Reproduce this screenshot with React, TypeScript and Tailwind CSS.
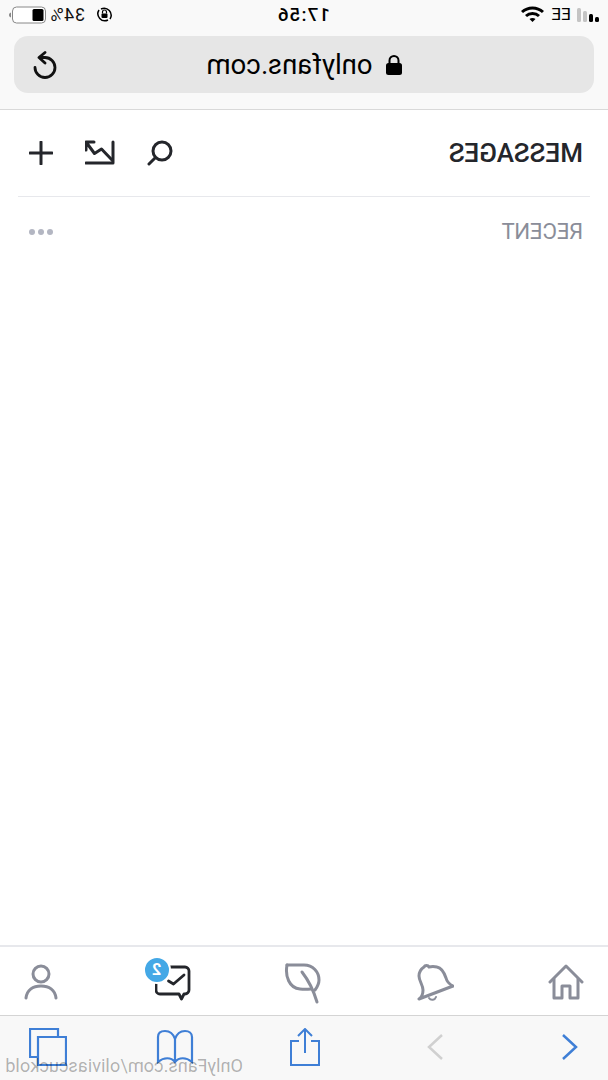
import React from 'react';

const Avatar = () => (
  <svg width="34" height="36" viewBox="0 0 34 36" fill="none" stroke="#8a8d99" strokeWidth="3" strokeLinecap="round" className="mt-[1px]">
    <circle cx="17" cy="10" r="8" />
    <path d="M2 34c1-8 7-12 15-12s14 4 15 12" />
  </svg>
);

const Bubble = () => (
  <svg width="36" height="37" viewBox="0 0 36 37" fill="none" stroke="#24262b" strokeWidth="2.800" strokeLinecap="round" strokeLinejoin="round">
    <path d="M6 3h25a4 4 0 0 1 4 4v19a4 4 0 0 1-4 4H12l-2.500 5L7 30H6a4 4 0 0 1-4-4V7a4 4 0 0 1 4-4z" />
    <path d="M7 11l10.500 9 5-3" />
  </svg>
);

const Leaf = () => (
  <svg width="38" height="42" viewBox="0 0 38 42" fill="none" stroke="#8a8d99" strokeWidth="3" strokeLinecap="round" strokeLinejoin="round" className="mt-[4px]">
    <path d="M35 3H18C9 3 3 10 3 18c0 3 1 6 4 10" />
    <path d="M35 3c2 11-2 23-13 24-3 .300-7 .300-11 0" />
    <path d="M20 10C13 19 8 30 5 40" />
  </svg>
);

const Bell = () => (
  <svg width="38" height="42" viewBox="0 0 38 42" fill="none" stroke="#8a8d99" strokeWidth="3" strokeLinecap="round" strokeLinejoin="round" className="mt-[4px]">
    <path d="M1 24c4-2 6-4 7-8 2-6 4-10 9-11 3-.700 6-.500 8 0 1-2 4-2 5 0 3 2 5 5 5 9 0 5-4 9-4 14 0 4 1 7 4 9z" />
    <path d="M18 35c1 3 5 4 7 1" strokeWidth="2" />
  </svg>
);

const Home = () => (
  <svg width="36" height="36" viewBox="0 0 36 36" fill="none" stroke="#8a8d99" strokeWidth="3" strokeLinecap="round" strokeLinejoin="round" className="mt-[1px]">
    <path d="M2 18L18 2l16 16" />
    <path d="M6 15v19h8V22h8v12h8V15" />
  </svg>
);

export default function App() {
  return (
    <div className="relative flex h-[1080px] w-[608px] -scale-x-100 flex-col overflow-hidden bg-white font-['Roboto',sans-serif]">
      {/* safari chrome */}
      <div className="h-[110px] border-b border-[#d9d9d9] bg-[#f9f9f9]">
        <div className="flex h-[36px] items-center justify-between pb-[7px] pl-[9px] pr-[8px]">
          <div className="flex w-[200px] items-center gap-[8px]">
            <svg width="23" height="14" viewBox="0 0 23 14" fill="#000">
              <rect x="0" y="9" width="4" height="5" rx="1.500" />
              <rect x="6" y="6" width="4" height="8" rx="1.500" />
              <rect x="12" y="3" width="4" height="11" rx="1.500" fill="#c4c4c4" />
              <rect x="18" y="0" width="4" height="14" rx="1.500" fill="#c4c4c4" />
            </svg>
            <span className="ml-[-3px] text-[17px] leading-none">EE</span>
            <svg width="23" height="17" viewBox="0 0 23 17" fill="none" stroke="#000" strokeWidth="3">
              <path d="M1 6c6-5.500 15-5.500 21 0" />
              <path d="M5 10c3.500-3.200 9.500-3.200 13 0" />
              <path d="M11.500 16l-3-3c1.800-1.300 4.200-1.300 6 0z" fill="#000" stroke="none" />
            </svg>
          </div>
          <span className="text-[19px] font-medium leading-none tracking-[1px] text-black">17:56</span>
          <div className="flex w-[200px] items-center justify-end gap-[4px]">
            <svg width="17" height="17" viewBox="0 0 17 17" fill="none" stroke="#000" strokeWidth="1.500" className="mr-[7px]">
              <path d="M3 13a7 7 0 0 1 9-10M14 4a7 7 0 0 1-9 10" />
              <rect x="5.500" y="7.500" width="6" height="4.500" rx="1" fill="#000" stroke="none" />
              <path d="M6.500 7.500V6a2 2 0 0 1 4 0v1.500" strokeWidth="1.200" />
            </svg>
            <span className="text-[18px] leading-none tracking-[0.500px] text-[#111]">34%</span>
            <svg width="38" height="18" viewBox="0 0 38 18">
              <rect x="0.500" y="1" width="33" height="16" rx="4" fill="#fff" stroke="#888" />
              <rect x="2.500" y="3" width="11" height="12" rx="1.500" fill="#000" />
              <path d="M35 6.500c1.500.5 2 1.500 2 2.500s-.5 2-2 2.500z" fill="#888" />
            </svg>
          </div>
        </div>
        <div className="mx-[14px] flex h-[57px] items-center rounded-[14px] bg-[#e6e6e6] pl-[43px] pr-[17px]">
          <div className="flex flex-1 items-center justify-center gap-[13px]">
            <svg width="16" height="20" viewBox="0 0 16 20" fill="#000">
              <rect x="0" y="8" width="16" height="12" rx="2.500" />
              <path d="M3.500 9V5.500a4.500 4.500 0 0 1 9 0V9" fill="none" stroke="#000" strokeWidth="2" />
            </svg>
            <span className="text-[27.500px] leading-none text-black">onlyfans.com</span>
          </div>
          <svg width="26" height="28" viewBox="0 0 26 28" fill="none" stroke="#111" strokeWidth="2.800" strokeLinecap="round" strokeLinejoin="round">
            <path d="M17 6.500h-5a10 10 0 1 0 10 10" />
            <path d="M12 1.500l6 5-6 5.500" />
          </svg>
        </div>
      </div>

      {/* header */}
      <div className="mx-[18px] flex h-[87px] items-center justify-between border-b border-[#e7e8ec] pl-[7px] pr-[11px]">
        <h1 className="text-[26px] font-medium uppercase leading-none text-[#24262b]">Messages</h1>
        <div className="flex items-center gap-[32px]">
          <svg width="26" height="26" viewBox="0 0 26 26" fill="none" stroke="#24262b" strokeWidth="3" strokeLinecap="round">
            <circle cx="11" cy="11" r="9" />
            <path d="M18 18l6 6" />
          </svg>
          <svg width="30" height="26" viewBox="0 0 30 26" fill="none" stroke="#24262b" strokeWidth="3" strokeLinecap="round" strokeLinejoin="round">
            <path d="M2 2v21h27" />
            <path d="M3 20l10.500-11 7 4.500L29 2M21 2h8v8" />
          </svg>
          <svg width="24" height="24" viewBox="0 0 24 24" fill="none" stroke="#24262b" strokeWidth="3" strokeLinecap="round">
            <path d="M12 1v22M1 12h22" />
          </svg>
        </div>
      </div>

      {/* recent row */}
      <div className="flex-1">
        <div className="mx-[18px] flex h-[70px] items-center justify-between pl-[7px] pr-[11px]">
          <span className="text-[22px] uppercase leading-none text-[#8a8d99]">Recent</span>
          <div className="flex gap-[3px]">
            <span className="size-[6px] rounded-full bg-[#b3b6c2]" />
            <span className="size-[6px] rounded-full bg-[#b3b6c2]" />
            <span className="size-[6px] rounded-full bg-[#b3b6c2]" />
          </div>
        </div>
      </div>

      {/* app tab bar */}
      <div className="flex h-[70px] items-center justify-between border-t-2 border-[#e7e8ec] px-[24px]">
        <Home />
        <Bell />
        <Leaf />
        <div className="relative mr-[3px] mt-[3px]">
          <Bubble />
          <span className="absolute -right-[12px] -top-[8px] flex size-[28px] items-center justify-center rounded-full border-2 border-white bg-[#44a8e6] text-[16px] font-bold text-white">2</span>
        </div>
        <Avatar />
      </div>

      {/* safari toolbar */}
      <div className="flex h-[65px] items-center border-t border-[#d4d4d4] bg-[#f8f8f8] pb-[3px] pl-[30px]">
        <svg width="16" height="28" viewBox="0 0 16 28" fill="none" stroke="#3f7fd6" strokeWidth="2.500">
          <path d="M15 2L2 14l13 12" />
        </svg>
        <svg width="16" height="28" viewBox="0 0 16 28" fill="none" stroke="#d0d0d0" strokeWidth="2.500" className="ml-[119px]">
          <path d="M1 2l13 12L1 26" />
        </svg>
        <svg width="30" height="38" viewBox="0 0 30 38" fill="none" stroke="#3f7fd6" strokeWidth="2" className="ml-[107px]">
          <path d="M9 13H1v24h28V13h-8M15 25V2M8 8l7-7 7 7" />
        </svg>
        <svg width="38" height="36" viewBox="0 0 38 36" fill="none" stroke="#3f7fd6" strokeWidth="2.200" className="ml-[96px]">
          <path d="M19 10C17 4 13 2 9 2 5 2 2 4 2 8v25c6-5 13-5 17 0 4-5 11-5 17 0V8c0-4-3-6-7-6-4 0-8 2-10 8v23" />
        </svg>
        <svg width="38" height="38" viewBox="0 0 38 38" fill="none" stroke="#3f7fd6" strokeWidth="2.200" className="ml-[89px]">
          <path d="M1 9h28v28H1zM9 9V1h28v28h-8" />
        </svg>
      </div>

      {/* watermark */}
      <span className="absolute bottom-[5px] left-[365px] whitespace-nowrap text-[18.200px] leading-none text-black/30">OnlyFans.com/oliviascuckold</span>
    </div>
  );
}
